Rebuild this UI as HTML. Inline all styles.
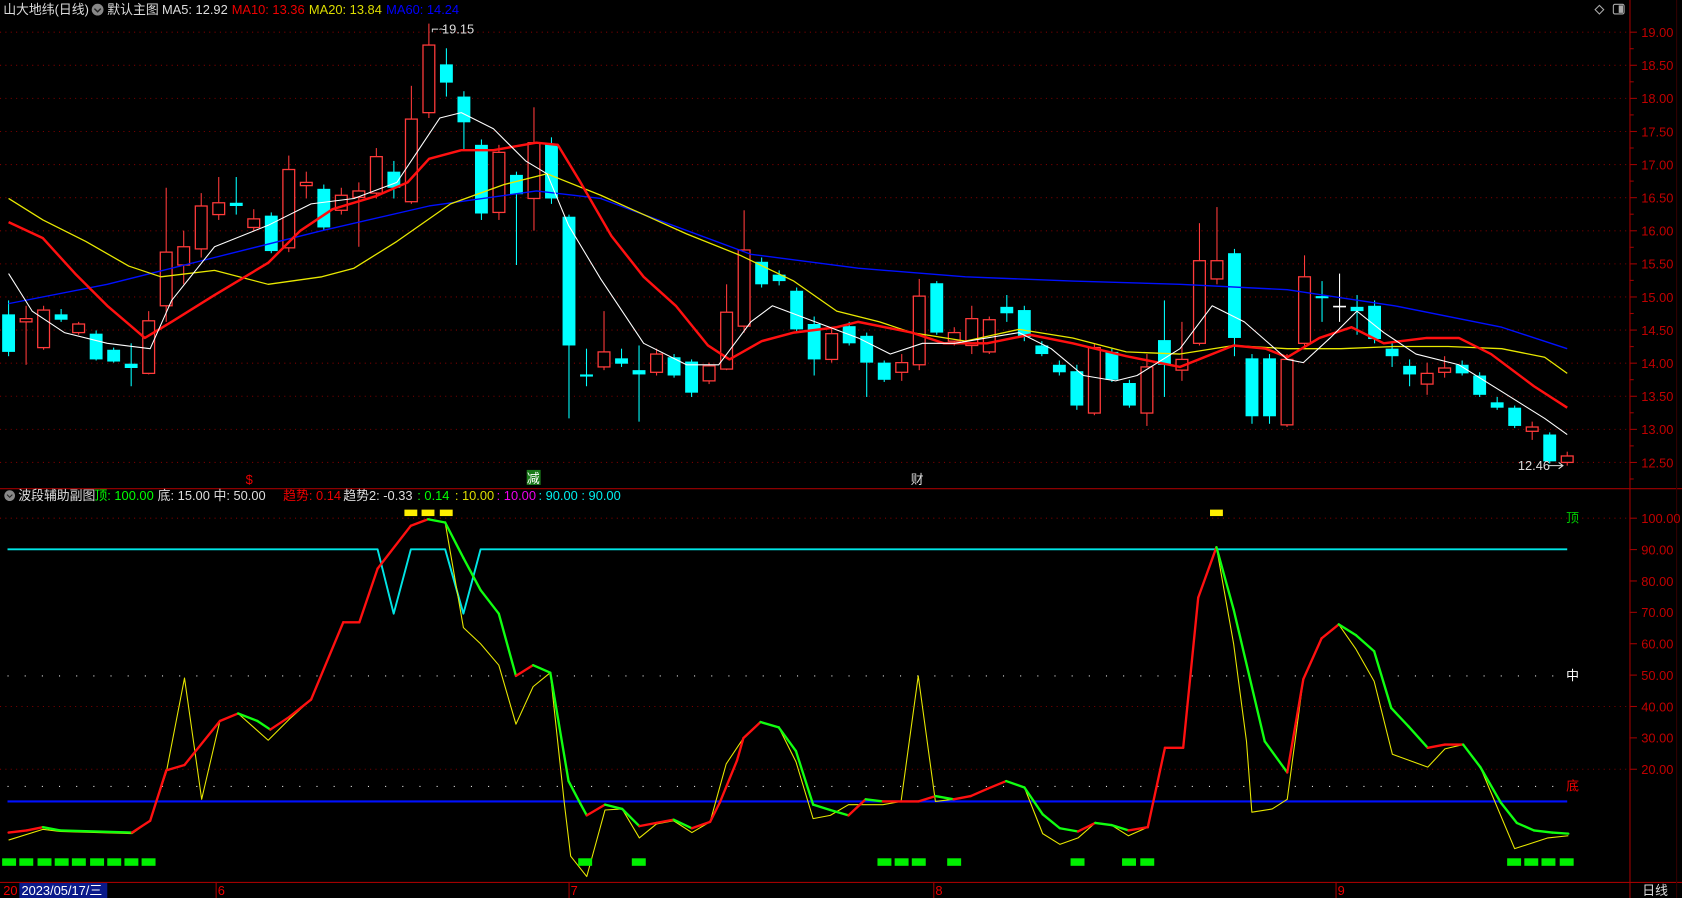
<!DOCTYPE html>
<html><head><meta charset="utf-8"><style>
html,body{margin:0;padding:0;background:#000;overflow:hidden}
svg{display:block}
text{font-family:"Liberation Sans","Noto Sans CJK SC",sans-serif;font-size:12px}
</style></head><body>
<svg id="s" width="1682" height="898" viewBox="0 0 1568 837" preserveAspectRatio="none" xmlns="http://www.w3.org/2000/svg">
<rect width="1568" height="837" fill="#000"/>
<g id="grid"></g>
<g id="candles"></g>
<g id="lines"></g>
<line x1="1519.5" y1="0" x2="1519.5" y2="837" stroke="#a00000"/>
<line x1="0" y1="455.5" x2="1568" y2="455.5" stroke="#a00000"/>
<line x1="0" y1="822.5" x2="1568" y2="822.5" stroke="#a00000"/>
<line x1="1563" y1="0" x2="1563" y2="837" stroke="#300"/>
<text x="3" y="13" fill="#ddd">山大地纬(日线)</text>
<circle cx="91" cy="9" r="5.5" fill="#888"/><path d="M88 8 l3 3 l3 -3" stroke="#222" fill="none" stroke-width="1.3"/>
<text x="100" y="13" fill="#ddd">默认主图</text>
<text x="151" y="13" fill="#ddd">MA5: 12.92</text>
<text x="216" y="13" fill="#e00">MA10: 13.36</text>
<text x="288" y="13" fill="#dd0">MA20: 13.84</text>
<text x="360" y="13" fill="#00f">MA60: 14.24</text>
<path d="M1491 5 l4 4 l-4 4 l-4 -4z" stroke="#aaa" fill="none"/>
<rect x="1504" y="4" width="10" height="9" rx="1.5" stroke="#aaa" fill="none"/><rect x="1509" y="5" width="4" height="7" fill="#aaa"/>
<text x="402" y="31" fill="#ddd">⌐~</text><text x="412" y="31" fill="#ddd">19.15</text>
<text x="1415" y="438" fill="#ddd">12.46</text><path d="M1443 434 h14 m-4 -3 l4 3 l-4 3" stroke="#ddd" fill="none"/>
<text x="229" y="451" fill="#e00">$</text>
<rect x="491" y="438" width="13" height="14" fill="#1a7a1a"/><text x="491" y="450" fill="#fff">减</text>
<text x="849" y="451" fill="#ddd">财</text>
<circle cx="9" cy="462" r="5" fill="#888"/><path d="M6.5 461 l2.5 2.5 l2.5 -2.5" stroke="#222" fill="none"/>
<text x="17" y="466" fill="#ddd">波段辅助副图</text>
<text x="88" y="466" fill="#0f0">顶: 100.00</text>
<text x="147" y="466" fill="#ddd">底: 15.00</text>
<text x="199" y="466" fill="#ddd">中: 50.00</text>
<text x="264" y="466" fill="#e00">趋势: 0.14</text>
<text x="320" y="466" fill="#ddd">趋势2: -0.33</text>
<text x="389" y="466" fill="#0f0">: 0.14</text>
<text x="424" y="466" fill="#dd0">: 10.00</text>
<text x="463" y="466" fill="#e0e">: 10.00</text>
<text x="502" y="466" fill="#0ee">: 90.00</text>
<text x="542" y="466" fill="#0ee">: 90.00</text>
<text x="1460" y="487" fill="#0c0">顶</text>
<text x="1460" y="634" fill="#fff">中</text>
<text x="1460" y="737" fill="#e00">底</text>
<text x="3" y="834" fill="#e00">20</text>
<rect x="18" y="823" width="82" height="14" fill="#0a1a8a"/>
<text x="20" y="834" fill="#fff">2023/05/17/三</text>
<line x1="201.5" y1="822" x2="201.5" y2="837" stroke="#a00000"/><text x="203" y="834" fill="#e00">6</text>
<line x1="530.5" y1="822" x2="530.5" y2="837" stroke="#a00000"/><text x="532" y="834" fill="#e00">7</text>
<line x1="870.5" y1="822" x2="870.5" y2="837" stroke="#a00000"/><text x="872" y="834" fill="#e00">8</text>
<line x1="1245.5" y1="822" x2="1245.5" y2="837" stroke="#a00000"/><text x="1247" y="834" fill="#e00">9</text>
<text x="1531" y="834" fill="#ddd">日线</text>
<g id="labels" fill="#c00000"></g>
</svg>
<script>
var NS="http://www.w3.org/2000/svg";
function el(p,t,a){var e=document.createElementNS(NS,t);for(var k in a)e.setAttribute(k,a[k]);document.getElementById(p).appendChild(e);return e;}
for(var k=0;k<=13;k++){var y=30+k*30.85;el('grid','line',{x1:0,x2:1519,y1:y,y2:y,stroke:'#7a0000','stroke-dasharray':'1 4'});
el('grid','line',{x1:1519,x2:1526,y1:y,y2:y,stroke:'#a00000'});
el('grid','line',{x1:1519,x2:1523,y1:y+15.4,y2:y+15.4,stroke:'#a00000'});
var t=el('labels','text',{x:1530,y:y+4.5});t.textContent=(19-k*0.5).toFixed(2);}
for(var v=100;v>=20;v-=10){var y=483+(100-v)*2.925;el('grid','line',{x1:1519,x2:1526,y1:y,y2:y,stroke:'#a00000'});
var t=el('labels','text',{x:1530,y:y+4.5});t.textContent=v.toFixed(2);
if(v==100||v==40||v==20)el('grid','line',{x1:0,x2:1519,y1:y,y2:y,stroke:'#7a0000','stroke-dasharray':'1 4'});}
[630,733].forEach(function(y){el('grid','line',{x1:7,x2:1460,y1:y,y2:y,stroke:'#ddd','stroke-dasharray':'1 15'});});
var C=[['c',293,328,280,332],['r',297,300,285,340],['r',289,324,285,326],['c',293,298,288,300],['r',302,310,300,312],['c',311,335,308,336],['c',326,337,324,338],['c',339,343,320,360],['r',299,348,290,349],['r',235,285,175,300],['r',230,247,215,265],['r',192,232,180,240],['r',189,200,165,205],['c',189,192,165,200],['r',204,212,195,215],['c',201,234,198,236],['r',158,231,145,235],['r',170,173,160,185],['c',176,212,172,214],['r',182,196,175,200],['r',178,184,170,230],['r',146,180,138,185],['c',160,175,150,185],['r',111,188,80,190],['r',42,105,22,110],['c',60,77,45,90],['c',90,114,85,140],['c',135,199,130,205],['r',142,198,135,205],['c',163,181,160,247],['r',133,185,100,215],['c',134,185,128,190],['c',202,322,200,390],['c',349,351,325,360],['r',328,342,290,345],['c',334,339,325,342],['c',345,349,322,393],['r',330,347,325,350],['c',333,350,330,352],['c',337,366,335,370],['r',341,355,338,358],['r',291,344,265,345],['r',233,304,196,310],['c',244,265,240,268],['c',256,262,252,266],['c',271,307,268,310],['c',302,335,295,350],['r',311,335,305,338],['c',304,320,300,322],['c',313,338,310,370],['c',338,354,336,356],['r',338,347,330,355],['r',276,340,260,345],['c',264,310,262,312],['r',310,318,305,322],['r',297,322,285,330],['r',298,328,295,330],['c',286,292,275,300],['c',289,314,285,318],['c',322,330,318,332],['c',340,347,336,350],['c',346,378,340,382],['r',324,385,320,387],['c',328,354,325,356],['c',357,378,354,380],['r',342,385,330,397],['c',317,340,280,370],['r',335,345,300,355],['r',243,320,208,322],['r',243,260,193,265],['c',236,315,232,332],['c',334,388,330,395],['c',334,388,330,395],['r',335,396,330,398],['r',258,320,238,325],['c',276,278,262,300],['w',285,286,255,300],['c',286,290,275,312],['c',285,316,280,320],['c',325,332,320,342],['c',341,349,335,360],['r',348,358,338,368],['r',343,347,332,352],['c',340,348,336,350],['c',350,368,347,370],['c',375,380,370,382],['c',380,397,378,399],['r',398,402,393,410],['c',405,430,403,432],['r',425,431,421,434]];
var N=C.length,sp=(1461-8)/(N-1);
C.forEach(function(c,i){var x=8+i*sp,col=c[0]=='c'?'#00ffff':c[0]=='r'?'#ff3a3a':'#fff';
el('candles','line',{x1:x,x2:x,y1:c[3],y2:c[4],stroke:col});
var h=Math.max(c[2]-c[1],1.5);
if(c[0]=='r')el('candles','rect',{x:x-5.5,y:c[1],width:11,height:h,fill:'#000',stroke:col,'stroke-width':1.2});
else el('candles','rect',{x:x-6,y:c[1],width:12,height:h,fill:col});});
function pl(pts,col,w){el('lines','polyline',{points:pts.map(function(p){return p.join(',')}).join(' '),fill:'none',stroke:col,'stroke-width':w,'stroke-linejoin':'round'});}
pl([[8,283],[100,265],[200,240],[300,215],[400,192],[500,178],[560,185],[600,200],[700,237],[800,250],[900,258],[1000,262],[1100,265],[1200,270],[1300,285],[1400,305],[1461,325]],'#0010ff',1.3);
pl([[8,185],[40,205],[80,225],[120,248],[150,258],[200,252],[250,265],[300,258],[330,250],[370,225],[420,190],[470,172],[510,162],[560,182],[600,200],[640,218],[690,238],[740,262],[780,290],[820,300],[850,310],[900,318],[950,307],[1000,315],[1050,328],[1100,330],[1150,322],[1200,325],[1250,325],[1300,323],[1350,323],[1400,325],[1440,333],[1461,348]],'#e8e800',1.2);
pl([[8,207],[40,222],[70,255],[100,285],[135,315],[160,300],[200,275],[250,245],[280,215],[310,195],[350,183],[380,170],[400,148],[430,140],[460,140],[500,133],[520,135],[540,168],[570,220],[600,258],[630,285],[660,322],[680,335],[710,318],[740,310],[780,305],[800,300],[850,310],[880,320],[920,320],[960,312],[1000,320],[1050,332],[1100,342],[1150,322],[1180,325],[1200,333],[1230,315],[1260,305],[1290,320],[1330,315],[1360,315],[1390,330],[1430,360],[1461,380]],'#ff1010',2.3);
pl([[8,255],[30,290],[60,310],[100,320],[140,325],[160,280],[200,230],[250,210],[290,190],[330,185],[370,170],[390,140],[410,110],[430,105],[460,120],[490,150],[510,162],[530,210],[560,260],[600,320],[640,340],[670,340],[700,300],[720,285],[760,300],[800,315],[830,330],[860,320],[890,320],[920,315],[950,310],[980,325],[1010,350],[1040,355],[1060,350],[1100,325],[1130,285],[1160,300],[1200,335],[1215,338],[1240,315],[1265,290],[1290,310],[1320,330],[1360,340],[1400,365],[1440,390],[1461,405]],'#fff',1);
el('lines','line',{x1:7,x2:1461,y1:747,y2:747,stroke:'#0010ff','stroke-width':2});
pl([[7,512],[352,512],[367,572],[383,512],[415,512],[432,572],[448,512],[1461,512]],'#00e5e5',1.8);
pl([[8,783],[40,773],[56,775],[123,777],[140,765],[155,720],[172,632],[188,745],[205,672],[222,665],[250,690],[270,670],[290,652],[320,580],[335,580],[352,530],[383,490],[399,484],[415,487],[432,585],[448,600],[465,620],[481,675],[497,640],[513,627],[526,748],[532,798],[547,817],[564,755],[580,754],[596,781],[612,768],[628,765],[645,776],[662,766],[677,712],[693,688],[709,673],[726,678],[742,710],[758,763],[774,760],[791,750],[823,750],[840,747],[856,630],[872,747],[889,745],[905,742],[921,735],[938,728],[955,734],[972,777],[988,787],[1005,781],[1021,767],[1036,769],[1052,779],[1070,771],[1086,697],[1103,697],[1117,557],[1134,510],[1150,600],[1162,691],[1167,757],[1186,754],[1200,745],[1215,633],[1232,595],[1248,582],[1264,605],[1281,635],[1298,703],[1331,715],[1347,698],[1364,694],[1380,715],[1412,791],[1443,781],[1462,779]],'#e8e800',1);
var M=[[8,776],[25,774],[40,771],[56,774],[123,776],[140,765],[155,718],[172,713],[205,672],[222,665],[240,672],[252,680],[270,668],[290,652],[320,580],[335,580],[352,530],[383,490],[399,484],[415,487],[432,520],[448,550],[465,572],[481,630],[497,620],[513,627],[530,728],[541,749],[547,760],[564,750],[580,754],[596,770],[612,767],[628,764],[645,772],[662,766],[671,748],[687,709],[693,688],[709,673],[726,678],[742,700],[758,750],[774,755],[791,760],[807,745],[823,747],[840,747],[856,747],[872,742],[889,745],[905,742],[921,735],[938,728],[955,734],[972,759],[988,772],[1005,775],[1021,767],[1036,769],[1052,774],[1070,771],[1086,697],[1103,697],[1117,557],[1134,510],[1150,568],[1179,691],[1200,720],[1215,633],[1232,595],[1248,582],[1264,592],[1281,607],[1297,660],[1313,677],[1331,697],[1347,694],[1364,694],[1380,715],[1399,748],[1414,767],[1430,774],[1447,776],[1462,777]];
for(var i=1;i<M.length;i++){var a=M[i-1],b=M[i];el('lines','line',{x1:a[0],y1:a[1],x2:b[0],y2:b[1],stroke:b[1]<=a[1]?'#ff1010':'#10ff10','stroke-width':2.2,'stroke-linecap':'round'});}
[377,393,410,1128].forEach(function(x){el('lines','rect',{x:x,y:475,width:12,height:6,fill:'#ffee00'});});
[2,18,35,51,67,84,100,116,132,539,589,818,834,850,883,998,1046,1063,1405,1421,1437,1454].forEach(function(x){el('lines','rect',{x:x,y:800,width:13,height:7,fill:'#00f000'});});
</script>
</body></html>
